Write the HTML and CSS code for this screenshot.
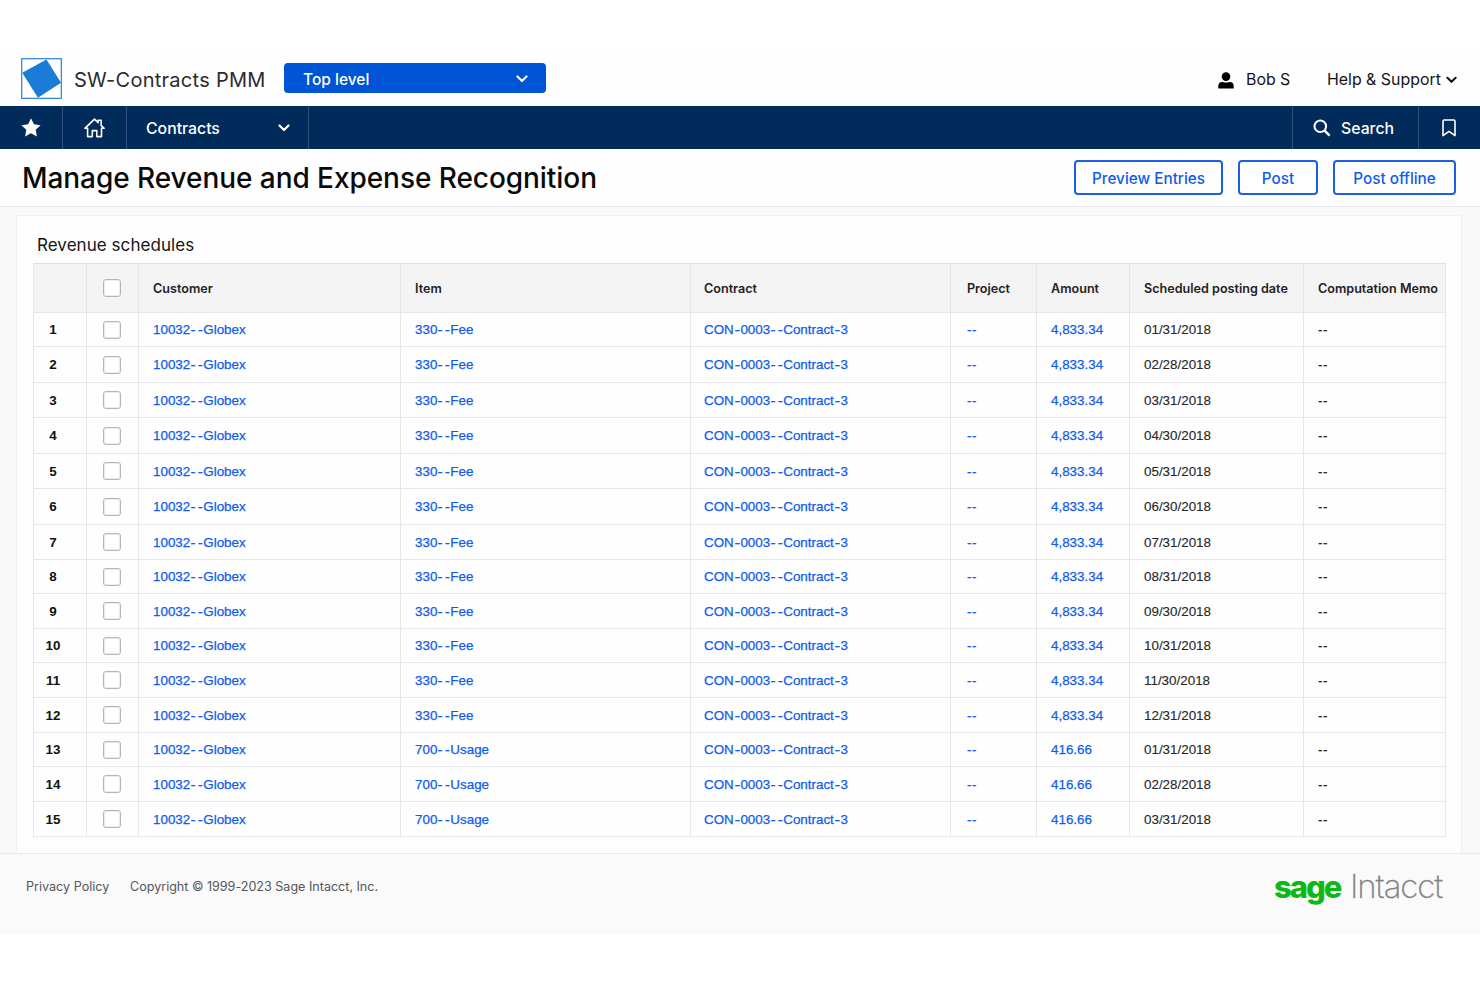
FILE: index.html
```html
<!DOCTYPE html>
<html lang="en">
<head>
<meta charset="utf-8">
<title>Manage Revenue and Expense Recognition</title>
<link rel="stylesheet" href="styles.css">
</head>
<body>
<div class="app">
  <header class="topbar">
    <svg class="logo" width="41" height="41" viewBox="0 0 41 41"><rect x=".7" y=".7" width="39.6" height="39.6" fill="#fff" stroke="#2482dc" stroke-width="1.2"/><path d="M1.200 14.800 25.500 1.500 40 24.700 17 39.800z" fill="#1b7cd6"/></svg>
    <span class="company">SW-Contracts PMM</span>
    <button class="level"><span>Top level</span><svg width="12" height="8" viewBox="0 0 12 8"><path class="chev" d="M1.5 1.5 6 6l4.500-4.500"/></svg></button>
    <div class="account">
      <svg width="16" height="17" viewBox="0 0 16 17"><circle cx="8" cy="4.600" r="4.300"/><path d="M.3 16v-2.200Q.3 9.900 4.300 9.900h.6q3.100 1.300 6.200 0h.6q4 0 4 3.900V16q0 .5-.6.5H.9q-.6 0-.6-.5z"/></svg>
      <span class="user">Bob S</span>
      <span class="help">Help &amp; Support</span>
      <svg width="11" height="8" viewBox="0 0 12 8"><path class="chev dark" d="M1.500 1.500 6 6l4.500-4.500"/></svg>
    </div>
  </header>
  <nav class="nav">
    <div class="nav-item star"><svg width="20" height="19" viewBox="0 0 20 19"><path fill="#fff" d="M10 .3l2.900 6 6.700.9-4.900 4.600 1.200 6.600L10 15.300l-5.900 3.100 1.200-6.600L.4 7.200l6.700-.9z"/></svg></div>
    <div class="nav-item home"><svg width="21" height="20" viewBox="0 0 21 20" fill="none" stroke="#fff" stroke-width="1.600" stroke-linejoin="round"><path d="M.9 10.300 10.500 1.200l3.600 3.400V2.200h3v5.200l3 2.900h-2.600V18.600h-4.700v-6H8.300v6H3.600v-8.300z"/></svg></div>
    <div class="nav-item module"><span>Contracts</span><svg width="12" height="8" viewBox="0 0 12 8"><path class="chev" d="M1.500 1.500 6 6l4.500-4.500"/></svg></div>
    <div class="nav-item search"><svg width="18" height="18" viewBox="0 0 18 18" fill="none" stroke="#fff"><circle cx="7.300" cy="7.300" r="5.800" stroke-width="2"/><path d="m11.600 11.600 5 5" stroke-width="2.400"/></svg><span>Search</span></div>
    <div class="nav-item mark"><svg width="14" height="18" viewBox="0 0 14 18" fill="none" stroke="#fff" stroke-width="1.600" stroke-linejoin="round"><path d="M1 2.200Q1 1 2.200 1h9.600Q13 1 13 2.200V16.600l-6-4.200-6 4.200z"/></svg></div>
  </nav>
  <section class="titlebar">
    <h1>Manage Revenue and Expense Recognition</h1>
    <div class="actions">
      <button class="btn preview">Preview Entries</button>
      <button class="btn post">Post</button>
      <button class="btn offline">Post offline</button>
    </div>
  </section>
  <main class="content">
    <div class="card">
      <h2>Revenue schedules</h2>
      <div class="table" id="schedules">
        <div class="row head">
          <div></div><div class="check"><i></i></div><div>Customer</div><div>Item</div><div class="contract">Contract</div><div class="project">Project</div><div>Amount</div><div>Scheduled posting date</div><div>Computation Memo</div>
        </div>
      </div>
    </div>
  </main>
  <footer class="footer">
    <a class="privacy">Privacy Policy</a>
    <span class="copyright">Copyright © 1999-2023 Sage Intacct, Inc.</span>
    <div class="brand"><span class="sage">sage</span><span class="intacct">Intacct</span></div>
  </footer>
</div>
<script src="table.js"></script>
</body>
</html>
```
FILE: styles.css
```css
* { box-sizing: border-box; }
body { margin: 0; background: #fff; font-family: Inter, "Liberation Sans", sans-serif; color: #1a1a1a; }
h1, h2 { margin: 0; }
button { font-family: inherit; }
svg { display: block; flex: none; }
.chev { fill: none; stroke: #fff; stroke-width: 2.2; stroke-linecap: round; stroke-linejoin: round; }
.chev.dark { stroke: #111; }
.app { width: 1480px; height: 987px; padding-top: 51px; display: flex; flex-direction: column; overflow: hidden; }

.topbar { height: 55px; padding: 0 23px 0 21px; display: flex; align-items: center; background: #fefefe; flex: none; }
.company { margin-left: 12px; width: 210px; padding-top: 3px; font-size: 20px; letter-spacing: 0.27px; color: #2b2b2e; white-space: nowrap; }
.level { width: 262px; height: 30px; margin-bottom: 1px; padding: 1px 18px 0 19px; display: flex; align-items: center; justify-content: space-between; background: #0054d6; border: 0; border-radius: 4px; color: #fff; font-size: 15.500px; font-weight: 500; line-height: 20px; }
.level span { padding-top: 2px; }
.account { margin-left: auto; padding-top: 3px; display: flex; align-items: center; font-size: 15.900px; line-height: 20px; color: #151515; white-space: nowrap; }
.user { margin-left: 12px; width: 81px; }
.help { width: 119px; }

.nav { height: 43px; display: flex; background: #002b5a; color: #fff; font-size: 15.800px; font-weight: 500; flex: none; }
.nav-item { display: flex; align-items: center; border-right: 1px solid #31507a; }
.nav-item span { padding-top: 1px; }
.star { width: 63px; padding-left: 21px; }
.home { width: 64px; padding-left: 21px; }
.module { width: 182px; padding: 0 18px 0 19px; justify-content: space-between; }
.search { width: 127px; margin-left: auto; padding-left: 20px; gap: 10px; border-left: 1px solid #31507a; }
.mark { width: 61px; padding-left: 23px; border-right: 0; }

.titlebar { height: 58px; padding: 0 24px 0 22px; display: flex; align-items: center; justify-content: space-between; border-bottom: 1px solid #e8e9ee; background: #fefefe; flex: none; }
h1 { font-size: 28px; font-weight: 500; letter-spacing: -0.06px; color: #0a0a0a; white-space: nowrap; }
.actions { display: flex; gap: 15px; }
.btn { height: 35px; padding: 1px 0 0; border: 2px solid #1a60e6; border-radius: 4px; background: #fff; color: #0f5cee; font-size: 15.300px; font-weight: 500; }
.preview { width: 149px; }
.post { width: 80px; }
.offline { width: 123px; }

.content { height: 646px; padding: 8px 18px 0 16px; background: #f9f9f9; flex: none; }
.card { height: 638px; padding: 0 16px; background: #fefefe; border: 1px solid #efeff2; border-bottom: 0; }
h2 { height: 47px; padding: 18px 0 0 4px; font-size: 17px; letter-spacing: 0.05px; line-height: 22px; font-weight: 400; color: #151515; }
.table { width: 1413px; border-left: 1px solid #e5e7ea; border-top: 1px solid #dfe0e3; font: 13.400px "Liberation Sans", Arial, sans-serif; }
.row { display: grid; grid-template-columns: 53px 52px 262px 290px 260px 86px 93px 174px 142px; height: var(--h); }
.row > div { display: flex; align-items: center; padding-left: 14px; border-right: 1px solid #e5e7ec; border-bottom: 1px solid #e5e7ec; white-space: nowrap; }
.row > .project { padding-left: 16px; }
.row > .contract { padding-left: 13px; }
.head { height: 49px; background: #f4f4f5; font: 600 12.600px Inter, sans-serif; color: #222; }
.row > .num { padding: 0 14px 0 0; justify-content: center; font-weight: 700; color: #111; }
.row > .check { padding: 0 2px 0 0; justify-content: center; }
.check i { width: 18px; height: 18px; background: #fff; border: 1px solid #b4b5b8; border-radius: 3px; box-shadow: inset 0 0 0 1px #ececee; }
.row > .link { color: #0f5cee; -webkit-text-stroke: 0.250px #0f5cee; }
.date, .memo { color: #262626; -webkit-text-stroke: 0.100px #262626; }
.row > .memo, .row > .link.project { letter-spacing: 0.500px; }
.dash { display: inline-block; width: 13px; padding-left: 1.200px; letter-spacing: 2px; transform: scaleX(1.150); }
.dash.single { width: auto; transform: scaleX(1.3); padding: 0 1.100px; letter-spacing: 0; }

.footer { height: 82px; padding: 0 38px 16px 26px; display: flex; align-items: center; background: #fafafa; border-top: 1px solid #e9eaed; font-size: 12.600px; color: #55565a; white-space: nowrap; flex: none; }
.privacy { width: 104px; }
.copyright { letter-spacing: -0.020px; }
.brand { margin-left: auto; display: flex; align-items: baseline; line-height: 36px; }
.sage { width: 76px; font-size: 31px; font-weight: 800; letter-spacing: -2px; color: #0db814; }
.intacct { width: 92px; font-size: 33px; font-weight: 200; letter-spacing: -1.100px; color: #7e7f82; -webkit-text-stroke: 0.300px #8b8c8e; }
```
FILE: table.js
```
const dates = ['01/31', '02/28', '03/31', '04/30', '05/31', '06/30', '07/31', '08/31', '09/30', '10/31', '11/30', '12/31', '01/31', '02/28', '03/31'];
const heights = [34, 36, 35, 36, 35, 36, 35, 34, 35, 34, 35, 35, 34, 35, 35];
const dashed = (text) => text.replace(/-+/g, (d) => `<span class="dash${d.length > 1 ? '' : ' single'}">${d}</span>`);
document.getElementById('schedules').insertAdjacentHTML('beforeend', dates.map((date, i) => {
  const fee = i < 12;
  return `<div class="row" style="--h:${heights[i]}px">
    <div class="num">${i + 1}</div><div class="check"><i></i></div>
    <div class="link"><span>${dashed('10032--Globex')}</span></div><div class="link"><span>${dashed(fee ? '330--Fee' : '700--Usage')}</span></div>
    <div class="link contract"><span>${dashed('CON-0003--Contract-3')}</span></div><div class="link project">--</div>
    <div class="link">${fee ? '4,833.34' : '416.66'}</div><div class="date">${date}/2018</div><div class="memo">--</div>
  </div>`;
}).join(''));
```
